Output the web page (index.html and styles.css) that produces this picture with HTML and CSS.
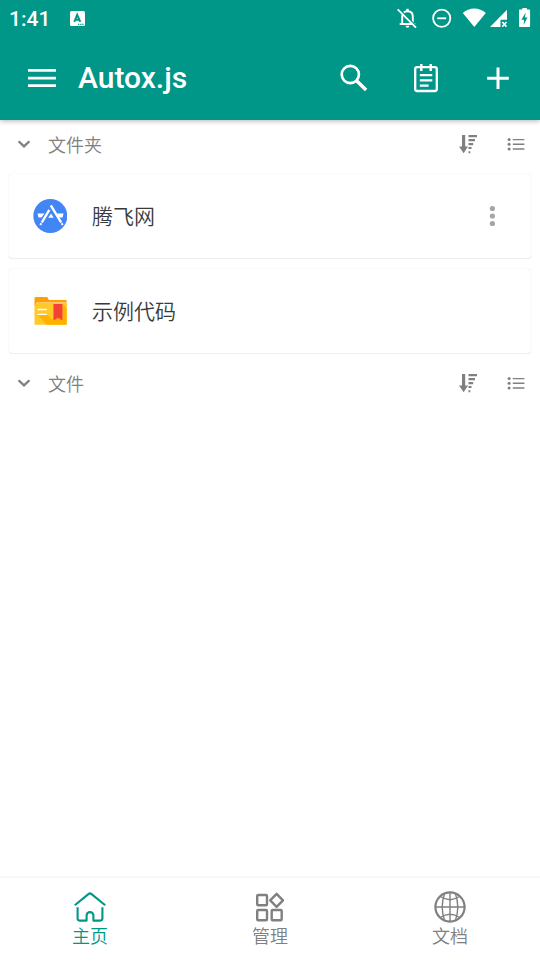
FILE: index.html
```html
<!DOCTYPE html>
<html lang="zh-CN">
<head>
<meta charset="utf-8">
<title>Autox.js</title>
<link rel="stylesheet" href="styles.css">
</head>
<body>
<svg class="defs" width="0" height="0">
  <symbol id="chevron" viewBox="0 0 12 8"><path d="M.6 1.200 6 6.400 11.400 1.200" fill="none" stroke="currentColor" stroke-width="2.200"/></symbol>
  <symbol id="sort" viewBox="0 0 20 20"><path d="M4 1h3.200v11.500H10L5.600 19.300 1 12.500h3zM10.500 1H19v2.300h-8.500zM10.500 5.100h6.500v2.200h-6.500zM10.500 9.100h4.700v2.100h-4.700zM10.500 13.100h3v2h-3zM10.500 17.200h1.800v2h-1.800z" fill="currentColor"/></symbol>
  <symbol id="list" viewBox="0 0 18 14"><g fill="currentColor"><circle cx="2.100" cy="2.600" r="1.500"/><circle cx="2.100" cy="7.300" r="1.500"/><circle cx="2.100" cy="12" r="1.500"/><path d="M5.800 1.900h11.600v1.400H5.800zM5.800 6.600h11.600v1.400H5.800zM5.800 11.300h11.600v1.400H5.800z"/></g></symbol>
</svg>
<div class="app">
  <header class="header">
    <div class="status">
      <span class="time">1:41</span>
      <svg class="badge" viewBox="0 0 15 15"><rect width="15" height="15" rx="1.500" fill="#fff"/><path d="M4.300 10.900 7.200 3.800 10.300 10.900M5.400 8.700h3.900" fill="none" stroke="#009688" stroke-width="1.900"/><path d="M8 13.300h1.200M10.200 13.300h1.200M12.300 13.300h1.200" stroke="#009688" stroke-width="1.200"/></svg>
      <div class="status-icons">
        <svg width="22" height="22" viewBox="396 7 22 22"><path d="M402.200 24V16.500C402.200 13.200 404.300 11.300 407.500 11.300S412.800 13.200 412.800 16.500V24M399.700 24H415.300" fill="none" stroke="#fff" stroke-width="1.900"/><path d="M407.500 8.800v3" stroke="#fff" stroke-width="2.400"/><path d="M405.600 25.800h3.800a1.900 1.900 0 0 1-3.800 0" fill="#fff"/><path d="m399 8.700 18 18" stroke="#009688" stroke-width="1.600"/><path d="m397.700 9.400 18.300 18.300" stroke="#fff" stroke-width="1.900"/></svg>
        <svg class="dnd" width="20" height="20" viewBox="0 0 20 20"><circle cx="9.700" cy="10.300" r="8.600" fill="none" stroke="#fff" stroke-width="1.800"/><path d="M5.200 10.300h9" stroke="#fff" stroke-width="1.800"/></svg>
        <svg class="wifi" width="25" height="22" viewBox="462 7 25 22"><path d="M474.300 27 462.800 13C469 7 479.500 7 485.800 13z" fill="#fff"/></svg>
        <svg class="signal" width="19" height="20" viewBox="489 8 19 20"><path d="M507 9.700v10h-6.500V27H490z" fill="#fff"/><path d="m502.300 22 4.200 4.600m0-4.600-4.200 4.600" stroke="#fff" stroke-width="1.600"/></svg>
        <svg class="battery" width="13" height="20" viewBox="518 8 13 20"><path d="M522.300 7.700h4.500V9.500h2.500q.8 0 .8.800v16q0 .8-.8.800h-9.500q-.8 0-.8-.8v-16q0-.8.800-.8h2.500z" fill="#fff"/><path d="M525.700 12.500 521.400 19.700h2.700L523.600 25l3.900-7.400h-2.600z" fill="#009688"/></svg>
      </div>
    </div>
    <div class="toolbar">
      <svg class="menu" viewBox="0 0 28 20"><path d="M0 2.400h28M0 10.100h28M0 17.700h28" stroke="#fff" stroke-width="2.800"/></svg>
      <h1>Autox.js</h1>
      <div class="actions">
        <svg width="30" height="30" viewBox="339 63 30 30"><circle cx="350.300" cy="74.500" r="8.600" fill="none" stroke="#fff" stroke-width="2.700"/><path d="m356.300 80.500 9.800 9.500" stroke="#fff" stroke-width="3.400"/></svg>
        <svg width="30" height="30" viewBox="411 63 30 30"><rect x="415.200" y="67.200" width="21.600" height="23.800" rx="2" fill="none" stroke="#fff" stroke-width="2.300"/><path d="M421.300 64v7M430.700 64v7" stroke="#fff" stroke-width="2.400"/><path d="M419.800 75.200h12.500M419.800 80.400h12.500M419.800 85.700h8.800" stroke="#fff" stroke-width="2.200"/></svg>
        <svg width="30" height="30" viewBox="483 63 30 30"><path d="M487.200 78.200h21.600M498 67.400V89" stroke="#fff" stroke-width="3"/></svg>
      </div>
    </div>
  </header>
  <main class="content">
    <section>
      <div class="section-head">
        <svg class="chevron"><use href="#chevron"/></svg>
        <h2>文件夹</h2>
        <svg class="sort"><use href="#sort"/></svg>
        <svg class="list"><use href="#list"/></svg>
      </div>
      <div class="cards">
        <div class="card">
          <svg class="item-icon" viewBox="33 199 34 34"><circle cx="50.300" cy="216" r="17" fill="#4285f4"/><path d="M37.500 213.500h7L41.500 217.500h-3zM57 213.500h6.500l-.9 4h-3.500zM48.200 217.700 51 213.600 53.700 217.700z" fill="#fff"/><path d="m49.300 209.800-7.500 12.700M50.800 205.300l10.400 17.200" stroke="#fff" stroke-width="2.400"/><path d="m41.300 223.200-1 1.700M61.700 223.200l1 1.700" stroke="#fff" stroke-width="2"/></svg>
          <span>腾飞网</span>
          <svg class="more" viewBox="0 0 6 22"><g fill="#a5a5a5"><circle cx="3.400" cy="3.500" r="2.600"/><circle cx="3.400" cy="11" r="2.600"/><circle cx="3.400" cy="18.500" r="2.600"/></g></svg>
        </div>
        <div class="card">
          <svg class="item-icon" viewBox="33 294 34 34"><path d="M35.500 297h11.700l1.800 3H66q.7 0 .7.700V306H34.500v-8q0-1 1-1z" fill="#ffa000"/><path d="M37 302.400h29.700V304H36z" fill="#fff3d6"/><path d="M35.500 304.500 38 303h28.700v21.800H34.500V305.500z" fill="#ffca28"/><path d="M37.500 314.500 46.500 324.800h20.200V308L62.500 304v16L53.500 304v16.500L47 314.500z" fill="#ffb300"/><path d="M37.500 309.500h9.300M37.500 314.300h9.300" stroke="#fff" stroke-width="1.300"/><path d="M53.500 304h9v16.500l-4.500-2.800-4.500 2.800z" fill="#f44336"/></svg>
          <span>示例代码</span>
        </div>
      </div>
    </section>
    <section>
      <div class="section-head">
        <svg class="chevron"><use href="#chevron"/></svg>
        <h2>文件</h2>
        <svg class="sort"><use href="#sort"/></svg>
        <svg class="list"><use href="#list"/></svg>
      </div>
    </section>
  </main>
  <nav class="nav">
    <a class="tab active">
      <svg viewBox="73 890 34 34"><g fill="none" stroke="currentColor" stroke-width="2.100" stroke-linejoin="round"><path d="M74.800 905.200 88.400 894.100q1.600-1.300 3.200 0L105.200 905.200"/><path d="M77.600 907.200V918.600q0 2 2 2H86.600V915.500a3.400 3.400 0 0 1 6.800 0v5.100h7q2 0 2-2V907.200"/></g></svg>
      <span>主页</span>
    </a>
    <a class="tab">
      <svg viewBox="253 890 34 34"><g fill="none" stroke="currentColor" stroke-width="2.400"><rect x="257.200" y="895" width="9.800" height="10.300" rx="1"/><rect x="257.200" y="910" width="9.800" height="10.300" rx="1"/><rect x="271.700" y="910" width="10" height="10.300" rx="1"/><path d="m276.600 893.800 6.400 6.500-6.400 6.500-6.400-6.500z" stroke-linejoin="round"/></g></svg>
      <span>管理</span>
    </a>
    <a class="tab">
      <svg viewBox="433 890 34 34"><g fill="none" stroke="currentColor" stroke-width="1.400"><circle cx="450" cy="907" r="14.600" stroke-width="2.200"/><path d="M435 907h30M450 892v30"/><path d="M444.700 893.200Q439.700 907 444.700 920.800M455.300 893.200Q460.300 907 455.300 920.800M440 896.300Q450 903.300 460 896.300M440 917.700Q450 910.700 460 917.700"/></g></svg>
      <span>文档</span>
    </a>
  </nav>
</div>
</body>
</html>
```
FILE: styles.css
```css
* { box-sizing: border-box; }
body { margin: 0; background: #fff; font-family: Roboto, "Noto Sans CJK SC", sans-serif; }
svg { display: block; flex: none; }
.defs { position: absolute; }
.app { height: 961px; display: flex; flex-direction: column; }
.header { height: 120px; background: #009688; color: #fff; box-shadow: 0 1px 5px rgba(0, 0, 0, .3); }
.status { height: 36px; display: flex; align-items: center; padding: 0 9px 0 9px; }
.time { width: 61px; font-size: 21px; font-weight: 480; line-height: 36px; padding-top: 2px; }
.badge { width: 15px; height: 15px; }
.status-icons { margin-left: auto; display: flex; align-items: center; }
.dnd { margin-left: 14px; }
.wifi { margin-left: 10px; }
.signal { margin-left: 2px; }
.battery { margin-left: 10px; }
.toolbar { height: 84px; display: flex; align-items: center; padding: 0 27px 0 28px; }
.menu { width: 28px; height: 20px; }
h1 { margin: 0 0 0 22px; font-size: 30px; line-height: 40px; font-weight: 480; }
.actions { margin-left: auto; display: flex; gap: 42px; }
.content { flex: 1; }
.section-head { height: 48px; display: flex; align-items: center; padding: 0 15px 0 18px; color: #808080; }
.chevron { width: 12px; height: 8px; }
h2 { margin: 0 auto 0 18px; padding-top: 3px; font-size: 18px; line-height: 26px; font-weight: 350; color: #808080; }
.sort { width: 20px; height: 20px; margin-right: 29px; }
.list { width: 18px; height: 14px; }
.cards { display: flex; flex-direction: column; gap: 11px; padding: 6px 9px; }
.card { height: 84px; display: flex; align-items: center; padding: 0 36px 0 24px; border-radius: 3px; font-size: 21px; line-height: 32px; font-weight: 350; color: #383b3e; box-shadow: 0 0 1px rgba(0, 0, 0, .18), 0 1px 1px rgba(0, 0, 0, .06); }
.card span { padding-top: 2px; }
.item-icon { width: 34px; height: 34px; margin-right: 25px; }
.more { width: 6px; height: 22px; margin-left: auto; }
.nav { height: 85px; display: flex; border-top: 2px solid #f7f7f7; }
.tab { flex: 1; display: flex; flex-direction: column; align-items: center; padding-top: 12px; font-size: 18px; line-height: 26px; font-weight: 350; color: #808080; }
.tab svg { width: 34px; height: 34px; }
.tab.active { color: #009688; }
```
